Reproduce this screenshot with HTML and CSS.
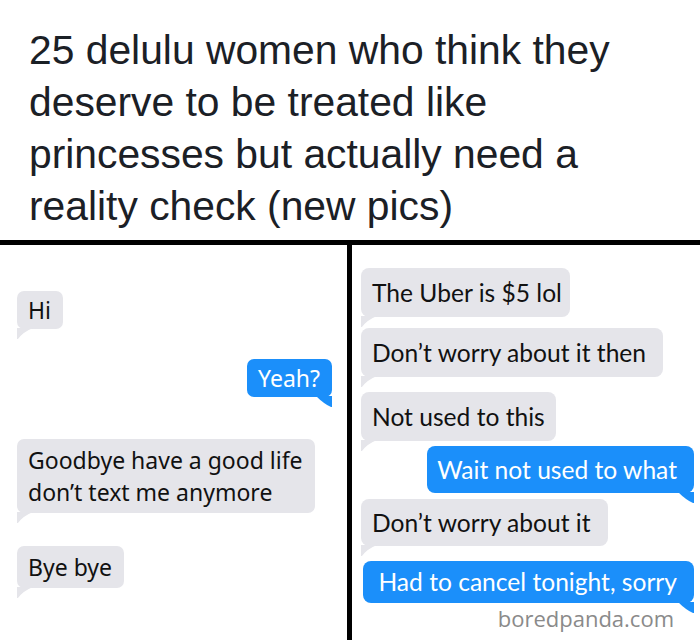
FILE: index.html
```html
<!DOCTYPE html>
<html lang="en">
<head>
<meta charset="utf-8">
<title>25 delulu women</title>
<link rel="stylesheet" href="styles.css">
</head>
<body>
<div class="page">
  <header class="header">
    <h1 class="title">25 delulu women who think they deserve to be treated like princesses but actually need a reality check (new pics)</h1>
  </header>
  <main class="panels">
    <section class="panel panel-left">
      <div class="bubble in tight b-hi">Hi</div>
      <div class="bubble out tight b-yeah">Yeah?</div>
      <div class="bubble in b-goodbye">Goodbye have a good life<br>don’t text me anymore</div>
      <div class="bubble in b-bye">Bye bye</div>
    </section>
    <section class="panel panel-right">
      <div class="bubble in b-uber">The Uber is $5 lol</div>
      <div class="bubble in b-then">Don’t worry about it then</div>
      <div class="bubble in b-notused">Not used to this</div>
      <div class="bubble out mid b-wait">Wait not used to what</div>
      <div class="bubble in mid b-dont">Don’t worry about it</div>
      <div class="bubble out low b-cancel">Had to cancel tonight, sorry</div>
      <div class="watermark">boredpanda.com</div>
    </section>
  </main>
</div>
</body>
</html>
```
FILE: styles.css
```css
html, body {
  margin: 0;
  padding: 0;
  background: #ffffff;
}

.page {
  width: 700px;
  height: 640px;
  overflow: hidden;
  display: flex;
  flex-direction: column;
}

.header {
  padding: 24px 40px 8px 29px;
  border-bottom: 5px solid #000;
  flex: none;
}

.title {
  margin: 0;
  font-family: "Liberation Sans", Arial, sans-serif;
  font-weight: normal;
  font-size: 40.8px;
  line-height: 52px;
  color: #1b2026;
}

.panels {
  flex: 1;
  display: grid;
  grid-template-columns: 347px 1fr;
}

.panel {
  display: flex;
  flex-direction: column;
  align-items: flex-start;
}

.panel-left {
  padding: 46px 15px 0 17px;
  font-family: "Noto Sans", "Open Sans", sans-serif;
  font-size: 23px;
}

.panel-right {
  border-left: 5px solid #000;
  padding: 23px 6px 0 9px;
  font-family: Lato, "Noto Sans", sans-serif;
  font-size: 24.6px;
}

.bubble {
  position: relative;
  padding: 5px 12px 5px 11px;
  border-radius: 7px;
  white-space: nowrap;
}

.panel-left .bubble {
  line-height: 32px;
}

.panel-left .bubble.tight {
  padding-top: 3px;
  padding-bottom: 3px;
}

.panel-right .bubble {
  line-height: 37px;
  padding: 6px 17px 6px 11px;
  border-radius: 8px;
}

.panel-right .bubble.mid {
  padding-top: 5px;
  padding-bottom: 5px;
}

.panel-right .bubble.low {
  padding-top: 2px;
  padding-bottom: 3px;
  padding-left: 15px;
}

.panel-right .bubble.b-wait {
  padding-left: 10px;
}

.panel-right .bubble.b-uber {
  padding-right: 8px;
}

.panel-right .bubble.b-notused {
  padding-right: 11px;
}

.bubble.in {
  background: #e5e5ea;
  color: #111111;
}

.bubble.out {
  background: #1b8ffa;
  color: #ffffff;
  align-self: flex-end;
}

.bubble.in::after,
.bubble.out::after {
  content: "";
  position: absolute;
  bottom: -10px;
  width: 16px;
  height: 11px;
}

.bubble.in::after {
  left: 0;
  background: #e5e5ea;
  clip-path: path('M0 0 L16 0 Q6 4 1 11 L0 11 Z');
}

.bubble.out::after {
  right: 0;
  background: #1b8ffa;
  clip-path: path('M0 0 L16 0 L16 11 L15 11 Q8 8 0 0 Z');
}

.b-yeah { margin-top: 30px; }
.b-goodbye { margin-top: 42px; }
.b-bye { margin-top: 33px; }

.b-then { margin-top: 11px; }
.b-notused { margin-top: 15px; }
.b-wait { margin-top: 5px; }
.b-dont { margin-top: 6px; }
.b-cancel { margin-top: 15px; }

.watermark {
  align-self: flex-end;
  margin: 4px 20px 0 0;
  font-family: "Open Sans", "DejaVu Sans", sans-serif;
  font-size: 22px;
  line-height: 22px;
  color: #8a8a8a;
}
```
